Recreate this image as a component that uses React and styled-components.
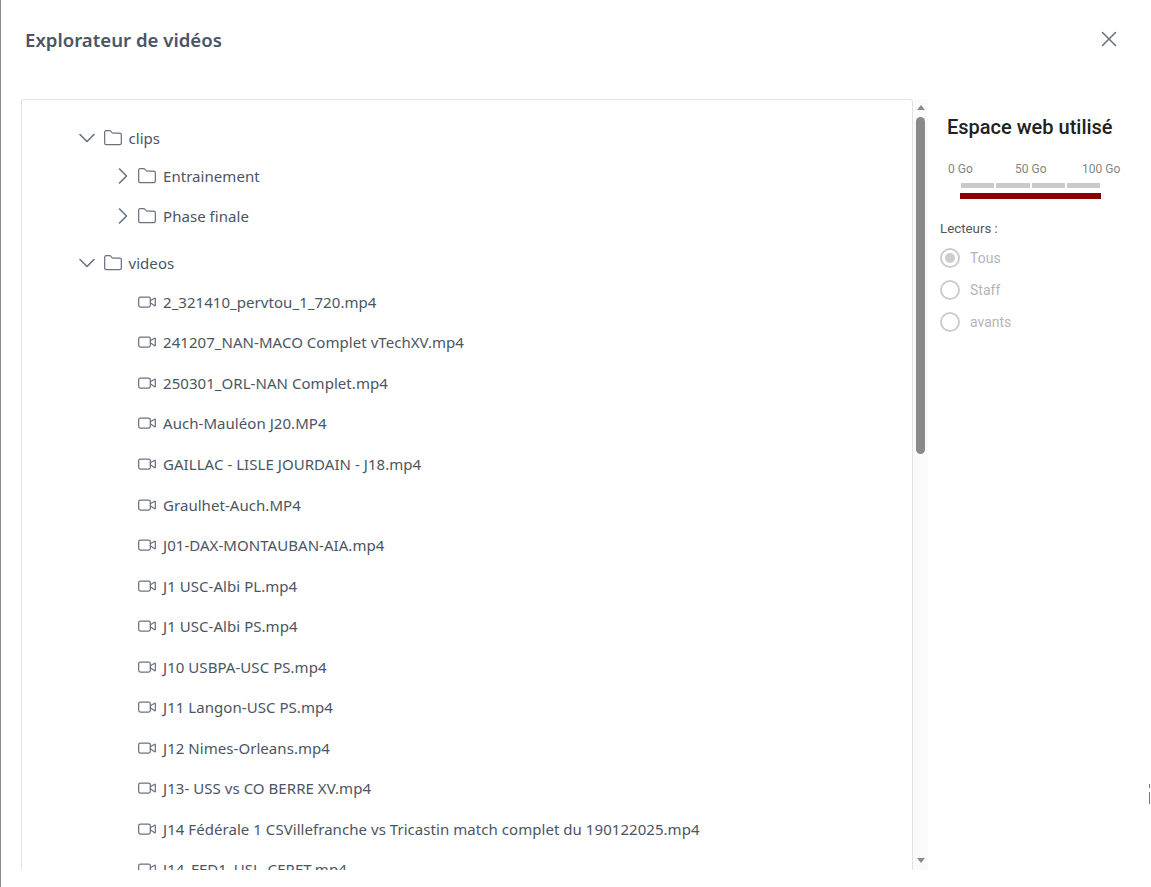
import React from 'react';
import styled, { createGlobalStyle } from 'styled-components';
import { ChevronDown, ChevronRight, Folder, Video, X } from 'lucide-react';

const Global = createGlobalStyle`
  html, body { margin: 0; padding: 0; background: #fff; }
  body { font-family: "Noto Sans", "Open Sans", sans-serif; overflow: hidden; }
`;

const Page = styled.div`
  position: relative;
  box-sizing: border-box;
  width: 1151px;
  height: 887px;
  border-left: 1px solid #8a8a8a;
  display: flex;
  flex-direction: column;
  overflow: hidden;
`;

const Header = styled.header`
  height: 99px;
  flex: none;
  box-sizing: border-box;
  padding: 28px 29px 0 24px;
  display: flex;
  justify-content: space-between;
  align-items: flex-start;
`;

const Title = styled.h1`
  margin: 0;
  font-size: 18.6px;
  line-height: 24px;
  font-weight: 600;
  color: #4b5563;
`;

const CloseButton = styled.button`
  border: 0;
  background: none;
  padding: 0;
  width: 26px;
  height: 26px;
  margin-top: -2px;
  color: #6b7280;
  display: flex;
`;

const Body = styled.main`
  display: flex;
  height: 771px;
  padding-left: 20px;
`;

const TreePanel = styled.section`
  width: 892px;
  flex: none;
  box-sizing: border-box;
  border: 1px solid #e2e2e2;
  border-bottom: 0;
  border-radius: 3px 3px 0 0;
  overflow: hidden;
  padding: 19px 0 0 56px;
`;

const Row = styled.div`
  display: flex;
  align-items: center;
  height: ${p => p.$h || 40.56}px;
  margin-top: ${p => p.$mt || 0}px;
  padding-left: ${p => p.$indent || 0}px;
  color: #4b5563;
  font-size: 15px;
  letter-spacing: 0.05px;
  white-space: nowrap;
`;

const Chevron = styled.span`
  width: 18px;
  height: 20px;
  margin-right: ${p => p.$gap}px;
  display: flex;
  align-items: center;
  justify-content: center;
  color: #6b7280;
  svg { flex: none; }
`;

const IconSlot = styled.span`
  width: 20px;
  height: 20px;
  margin-right: 6px;
  display: flex;
  align-items: center;
  color: #6b7280;
`;

const Scrollbar = styled.div`
  width: 15px;
  flex: none;
  background: #fafafa;
  display: flex;
  flex-direction: column;
  align-items: center;
`;

const ArrowUp = styled.div`
  margin-top: 6px;
  width: 0;
  height: 0;
  border-left: 4.5px solid transparent;
  border-right: 4.5px solid transparent;
  border-bottom: 5px solid #8a8a8a;
`;

const Thumb = styled.div`
  margin-top: 7px;
  width: 9px;
  height: 337px;
  border-radius: 5px;
  background: #8a8a8a;
`;

const ArrowDown = styled.div`
  margin-top: auto;
  margin-bottom: 7px;
  width: 0;
  height: 0;
  border-left: 4.5px solid transparent;
  border-right: 4.5px solid transparent;
  border-top: 5px solid #8a8a8a;
`;

const Side = styled.aside`
  flex: 1;
  padding: 16px 0 0 12px;
  font-family: Roboto, sans-serif;
`;

const SideTitle = styled.h2`
  margin: 0 0 0 7px;
  font-size: 20px;
  line-height: 24px;
  font-weight: 500;
  color: #212121;
  white-space: nowrap;
`;

const Scale = styled.div`
  margin: 23px 0 0 8px;
  display: grid;
  grid-template-columns: 67px 67px auto;
  font-size: 12px;
  line-height: 14px;
  color: #858585;
`;

const Gauge = styled.div`
  width: 141px;
  margin: 7px 0 0 20px;
`;

const Segments = styled.div`
  display: flex;
  gap: 2px;
  padding: 0 1px;
`;

const Segment = styled.div`
  flex: 1;
  height: 5px;
  background: #cacaca;
`;

const Used = styled.div`
  height: 6px;
  margin-top: 5px;
  background: #8b0000;
`;

const GroupLabel = styled.div`
  margin-top: 22px;
  font-size: 13.3px;
  line-height: 16px;
  color: #555;
`;

const Radios = styled.div`
  margin-top: 11px;
  display: flex;
  flex-direction: column;
  gap: 12px;
`;

const RadioRow = styled.label`
  display: flex;
  align-items: center;
  gap: 10px;
  height: 20px;
  font-size: 14px;
  color: #b5b5b5;
`;

const RadioMark = styled.span`
  box-sizing: border-box;
  width: 20px;
  height: 20px;
  border: 2px solid #cdcdcd;
  border-radius: 50%;
  display: flex;
  align-items: center;
  justify-content: center;
  &::after {
    content: "";
    width: 10px;
    height: 10px;
    border-radius: 50%;
    background: ${p => (p.$checked ? '#cdcdcd' : 'transparent')};
  }
`;

const EdgeMark = styled.div`
  position: absolute;
  right: 1px;
  top: 784px;
  width: 1px;
  height: 20px;
  background: linear-gradient(#777 0 4px, transparent 4px 8px, #777 8px);
`;

const files = [
  '2_321410_pervtou_1_720.mp4',
  '241207_NAN-MACO Complet vTechXV.mp4',
  '250301_ORL-NAN Complet.mp4',
  'Auch-Mauléon J20.MP4',
  'GAILLAC - LISLE JOURDAIN - J18.mp4',
  'Graulhet-Auch.MP4',
  'J01-DAX-MONTAUBAN-AIA.mp4',
  'J1 USC-Albi PL.mp4',
  'J1 USC-Albi PS.mp4',
  'J10 USBPA-USC PS.mp4',
  'J11 Langon-USC PS.mp4',
  'J12 Nimes-Orleans.mp4',
  'J13- USS vs CO BERRE XV.mp4',
  'J14 Fédérale 1 CSVillefranche vs Tricastin match complet du 190122025.mp4',
  'J14_FED1_USL_CERET.mp4',
];

const FolderRow = ({ name, open, indent, h, mt, gap }) => (
  <Row $indent={indent} $h={h} $mt={mt}>
    <Chevron $gap={gap}>
      {open ? <ChevronDown size={28} strokeWidth={1.4} /> : <ChevronRight size={28} strokeWidth={1.4} />}
    </Chevron>
    <IconSlot><Folder size={20} strokeWidth={1.5} /></IconSlot>
    {name}
  </Row>
);

export default function App() {
  return (
    <Page>
      <Global />
      <Header>
        <Title>Explorateur de vidéos</Title>
        <CloseButton aria-label="Fermer"><X size={26} strokeWidth={1.5} /></CloseButton>
      </Header>
      <Body>
        <TreePanel>
          <FolderRow name="clips" open h={37} gap={6.5} />
          <FolderRow name="Entrainement" indent={36} h={40} gap={5} />
          <FolderRow name="Phase finale" indent={36} h={40} gap={5} />
          <FolderRow name="videos" open h={37.5} mt={8} gap={6.5} />
          {files.map(f => (
            <Row key={f} $indent={59}>
              <IconSlot><Video size={20} strokeWidth={1.5} /></IconSlot>
              {f}
            </Row>
          ))}
        </TreePanel>
        <Scrollbar>
          <ArrowUp />
          <Thumb />
          <ArrowDown />
        </Scrollbar>
        <Side>
          <SideTitle>Espace web utilisé</SideTitle>
          <Scale><span>0 Go</span><span>50 Go</span><span>100 Go</span></Scale>
          <Gauge>
            <Segments><Segment /><Segment /><Segment /><Segment /></Segments>
            <Used />
          </Gauge>
          <GroupLabel>Lecteurs :</GroupLabel>
          <Radios>
            <RadioRow><RadioMark $checked />Tous</RadioRow>
            <RadioRow><RadioMark />Staff</RadioRow>
            <RadioRow><RadioMark />avants</RadioRow>
          </Radios>
        </Side>
      </Body>
      <EdgeMark />
    </Page>
  );
}
